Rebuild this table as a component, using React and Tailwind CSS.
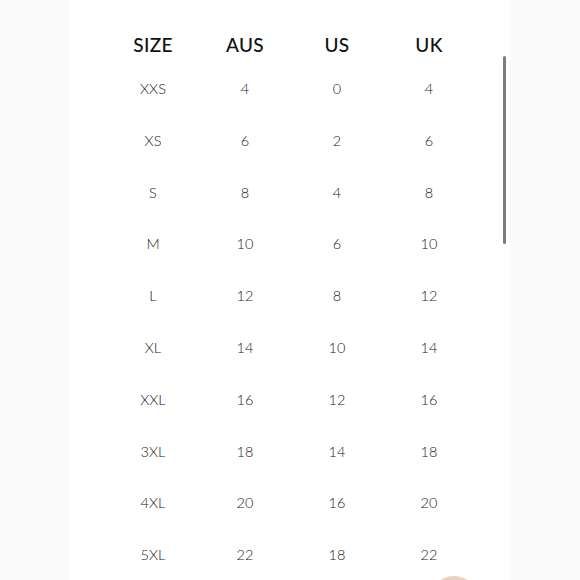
import React from "react";

const rows = [
  ["XXS", "4", "0", "4"],
  ["XS", "6", "2", "6"],
  ["S", "8", "4", "8"],
  ["M", "10", "6", "10"],
  ["L", "12", "8", "12"],
  ["XL", "14", "10", "14"],
  ["XXL", "16", "12", "16"],
  ["3XL", "18", "14", "18"],
  ["4XL", "20", "16", "20"],
  ["5XL", "22", "18", "22"],
];

export default function App() {
  return (
    <div className="relative w-[580px] h-[580px] overflow-hidden flex bg-[#fafafa]" style={{ fontFamily: "Lato, 'Open Sans', sans-serif" }}>
      <div className="w-[69px] h-full bg-[#fafafa]" />
      <div className="relative w-[441px] h-full bg-white">
        <div className="pl-[38px] pt-[27px]">
          <div className="grid grid-cols-[92px_92px_92px_92px] h-[36px] items-center text-center text-[19px] font-medium text-[#111] tracking-[0.3px]">
            <div>SIZE</div>
            <div>AUS</div>
            <div>US</div>
            <div>UK</div>
          </div>
          {rows.map((r) => (
            <div key={r[0]} className="grid grid-cols-[92px_92px_92px_92px] h-[51.8px] items-center text-center text-[14.5px] font-light text-[#222]">
              {r.map((c, i) => (
                <div key={i}>{c}</div>
              ))}
            </div>
          ))}
        </div>
        <div className="absolute left-[434px] top-[56px] w-[3px] h-[188px] rounded-full bg-[#7d7d7d]" />
        <div className="absolute left-[360px] top-[576px] w-[50px] h-[50px] rounded-full bg-[#e6d3c4]" />
      </div>
      <div className="flex-1 h-full bg-[#fbfafa]" />
    </div>
  );
}
